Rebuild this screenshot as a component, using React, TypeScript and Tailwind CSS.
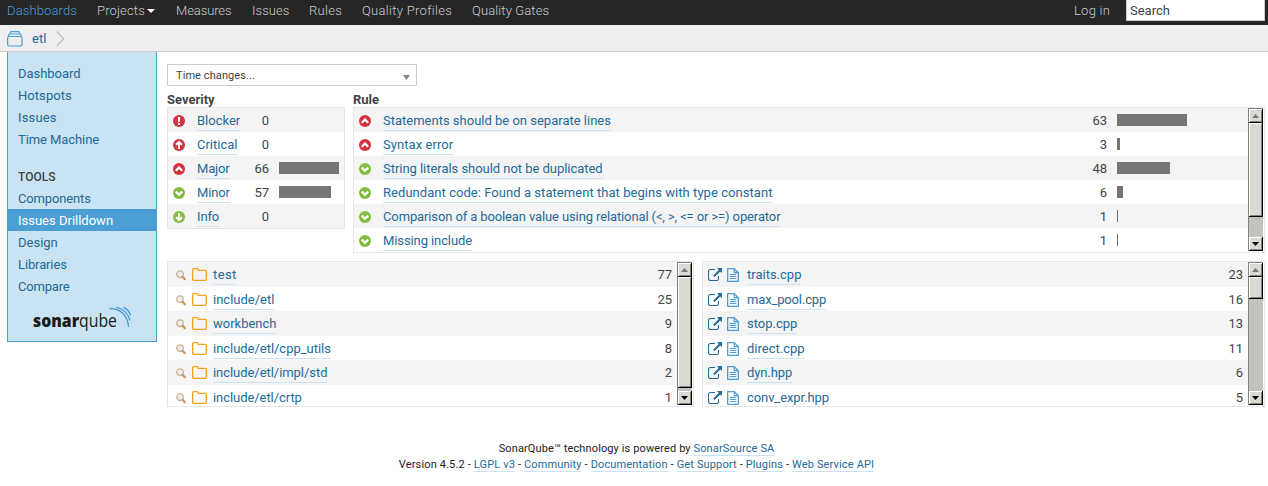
import React from "react";

const nav = [
  { label: "Dashboards", cls: "w-[90px] tracking-[0.12px] text-[#4b9fd5]" },
  { label: "Projects", cls: "w-[79px] tracking-[0.15px] text-[#ccc]", caret: true },
  { label: "Measures", cls: "w-[76px] tracking-[-0.1px] text-[#ccc]" },
  { label: "Issues", cls: "w-[57px] tracking-[0.05px] text-[#ccc]" },
  { label: "Rules", cls: "w-[53px] tracking-[0.3px] text-[#ccc]" },
  { label: "Quality Profiles", cls: "w-[110px] tracking-[0.3px] text-[#ccc]" },
  { label: "Quality Gates", cls: "w-[90px] tracking-[0.12px] text-[#ccc]" },
];

type Level = "blocker" | "critical" | "major" | "minor" | "info";

const severities: { level: Level; label: string; count: number; bar: string; cls: string }[] = [
  { level: "blocker", label: "Blocker", count: 0, bar: "w-0", cls: "" },
  { level: "critical", label: "Critical", count: 0, bar: "w-0", cls: "" },
  { level: "major", label: "Major", count: 66, bar: "w-[60px]", cls: "tracking-[-0.15px]" },
  { level: "minor", label: "Minor", count: 57, bar: "w-[52px]", cls: "tracking-[-0.15px]" },
  { level: "info", label: "Info", count: 0, bar: "w-0", cls: "tracking-[-0.15px]" },
];

const rules: { level: Level; label: string; count: number; bar: string; cls: string }[] = [
  { level: "major", label: "Statements should be on separate lines", count: 63, bar: "w-[70px]", cls: "" },
  { level: "major", label: "Syntax error", count: 3, bar: "w-[3px]", cls: "tracking-[0.06px]" },
  { level: "minor", label: "String literals should not be duplicated", count: 48, bar: "w-[53px]", cls: "tracking-[-0.04px]" },
  { level: "minor", label: "Redundant code: Found a statement that begins with type constant", count: 6, bar: "w-[6px]", cls: "tracking-[0.05px]" },
  { level: "minor", label: "Comparison of a boolean value using relational (<, >, <= or >=) operator", count: 1, bar: "w-px", cls: "tracking-[-0.12px]" },
  { level: "minor", label: "Missing include", count: 1, bar: "w-px", cls: "tracking-[-0.1px]" },
];

const folders = [
  { label: "test", count: 77, cls: "tracking-[0.4px]" },
  { label: "include/etl", count: 25, cls: "" },
  { label: "workbench", count: 9, cls: "" },
  { label: "include/etl/cpp_utils", count: 8, cls: "tracking-[-0.03px]" },
  { label: "include/etl/impl/std", count: 2, cls: "tracking-[-0.05px]" },
  { label: "include/etl/crtp", count: 1, cls: "tracking-[-0.06px]" },
];

const files = [
  { label: "traits.cpp", count: 23, cls: "" },
  { label: "max_pool.cpp", count: 16, cls: "tracking-[-0.15px]" },
  { label: "stop.cpp", count: 13, cls: "" },
  { label: "direct.cpp", count: 11, cls: "" },
  { label: "dyn.hpp", count: 6, cls: "tracking-[-0.1px]" },
  { label: "conv_expr.hpp", count: 5, cls: "tracking-[-0.08px]" },
];

const rowHeights = ["h-[25px]", "h-6", "h-[25px]", "h-6", "h-[25px]", "h-[25px]"];

function SeverityIcon({ level }: { level: Level }) {
  const green = level === "minor" || level === "info";
  return (
    <svg width="12" height="12" viewBox="0 0 12 12" fill="none" className="mt-[2px] block shrink-0">
      <circle cx="6" cy="6" r="6" fill={green ? "#85bb43" : "#d4333f"} />
      {level === "blocker" && (
        <g fill="#fff">
          <path d="M4.8 2h2.4l-.3 5H5.1z" />
          <rect x="5" y="8" width="2" height="2" />
        </g>
      )}
      {level === "critical" && <path d="M6 10V3M3 5.8 6 2.9l3 2.9" stroke="#fff" strokeWidth="1.9" />}
      {level === "major" && <path d="M2.8 7.7 6 4.5l3.2 3.2" stroke="#fff" strokeWidth="2.2" />}
      {level === "minor" && <path d="M2.8 4.6 6 7.8l3.2-3.2" stroke="#fff" strokeWidth="2.2" />}
      {level === "info" && <path d="M6 2v7M3 6.2l3 2.9 3-2.9" stroke="#fff" strokeWidth="1.9" />}
    </svg>
  );
}

function MagnifierIcon() {
  return (
    <svg width="10" height="11" viewBox="0 0 10 11" fill="none" className="block">
      <circle cx="4" cy="4.2" r="3.3" fill="#e6eef6" stroke="#d9b088" strokeWidth="1.3" />
      <path d="m6.6 6.8 2.2 2.4" stroke="#c9995f" strokeWidth="2.2" strokeLinecap="round" />
    </svg>
  );
}

function FolderIcon() {
  return (
    <svg width="15" height="13" viewBox="0 0 15 13" fill="none" className="block">
      <path
        d="M.65 1.9Q.65.65 1.9.65h3.2q1.2 0 1.2 1.2v.5h6.8q1.25 0 1.25 1.25v7.5q0 1.25-1.25 1.25H1.9Q.65 12.35.65 11.1z"
        stroke="#f9a01b"
        strokeWidth="1.3"
      />
    </svg>
  );
}

function ExternalIcon() {
  return (
    <svg width="14" height="13" viewBox="0 0 14 13" fill="none" className="block">
      <path d="M7 1.5H2.5Q.5 1.5.5 3.5v7q0 2 2 2H9q1.500 0 1.500-2V8" stroke="#236a97" strokeWidth="1.05" />
      <path d="M9 0h5v5l-1.700-1.600-5.800 5.700-1.300-1.300 5.600-5.900z" fill="#236a97" />
    </svg>
  );
}

function FileIcon() {
  return (
    <svg width="12" height="14" viewBox="0 0 12 14" fill="none" className="block">
      <path d="M.65.65h6.6l4.1 4.1v8.6H.65z" stroke="#4b9fd5" strokeWidth="1.3" strokeLinejoin="round" />
      <path d="M7.3.8v3.9h3.9M2.7 6.5h6.6M2.7 8.5h6.6M2.7 10.5h6.6" stroke="#4b9fd5" strokeWidth="1.2" />
    </svg>
  );
}

function ProjectIcon() {
  return (
    <svg width="16" height="16" viewBox="0 0 16 16" fill="none" className="block" stroke="#4b9fd5">
      <rect x=".6" y="5.5" width="14.4" height="9.5" rx="1.4" strokeWidth="1.2" />
      <path d="M1.5 5.3V4q0-1 1-1h10.6q1 0 1 1v1.3M3.2 2.8V1.5q0-.9.9-.9h7.4q.9 0 .9.9v1.3" strokeWidth="1.1" />
    </svg>
  );
}

function Logo() {
  return (
    <svg width="100" height="28" viewBox="0 0 100 28" className="block">
      <text x="1" y="21" fontFamily="'Open Sans', sans-serif" fontSize="18" fontWeight="800" fill="#1b1b1b" textLength="84" lengthAdjust="spacingAndGlyphs">
        sonar<tspan fontWeight="400">qube</tspan>
      </text>
      <g fill="none" stroke="#4b9fd5" strokeWidth="1.4">
        <path d="M77.500 2.500C88 2 96 9.500 96.500 21" />
        <path d="M84.500 1.200C91 3 96.500 8 98 14.500" />
        <path d="M91.500 1.200c3.200 1.700 5.700 4.300 7.300 7.800" />
      </g>
    </svg>
  );
}

function ScrollButton({ up }: { up?: boolean }) {
  return (
    <div className="flex h-[14px] w-[14px] shrink-0 items-center justify-center border-r border-b border-black bg-[#dad9d2] shadow-[inset_1px_1px_0_#fff,inset_-1px_-1px_0_#85847e]">
      <svg width="7" height="4" viewBox="0 0 7 4" className="block">
        {up ? <path d="M3.5 0 7 4H0z" fill="#777" /> : <path d="M0 0h7L3.5 4z" fill="#000" />}
      </svg>
    </div>
  );
}

function Scrollbar({ thumb }: { thumb: string }) {
  return (
    <div className="flex h-[143px] w-[15px] shrink-0 flex-col border-t border-l border-[#85847e] bg-[#c3c2bc]">
      <ScrollButton up />
      <div className={`w-[14px] border-r border-b border-black bg-[#dad9d2] shadow-[inset_1px_1px_0_#fff,inset_-1px_-1px_0_#85847e] ${thumb}`} />
      <div className="mt-auto">
        <ScrollButton />
      </div>
    </div>
  );
}

function Link({ children, cls = "" }: { children: React.ReactNode; cls?: string }) {
  return <a className={`block h-[18px] border-b border-[#cae3f2] leading-4 whitespace-nowrap text-[#236a97] ${cls}`}>{children}</a>;
}

function SideItem({ label, active, cls = "" }: { label: string; active?: boolean; cls?: string }) {
  return (
    <a className={`block h-[22px] pl-[10px] leading-[24px] ${active ? "bg-[#4b9fd5] text-white" : "text-[#236a97]"} ${cls}`}>{label}</a>
  );
}

export default function App() {
  return (
    <div className="h-[486px] w-[1268px] overflow-hidden bg-white font-[Roboto,sans-serif] text-[13px] text-[#444]">
      <header className="flex h-[25px] bg-[#262626] pl-[7px] font-light">
        <nav className="flex">
          {nav.map((n) => (
            <a key={n.label} className={`flex h-[22px] items-center whitespace-nowrap ${n.cls}`}>
              {n.label}
              {n.caret && (
                <svg width="8" height="4" viewBox="0 0 8 4" className="ml-[2px]">
                  <path d="M0 0h8L4 4z" fill="#fff" />
                </svg>
              )}
            </a>
          ))}
        </nav>
        <a className="ml-auto h-[22px] w-[52px] leading-[22px] tracking-[0.25px] text-[#ccc]">Log in</a>
        <div className="mr-[3px] h-[21px] w-[139px] border-r border-b border-l border-[#ccc] bg-white pl-[3px] font-normal leading-[22px]">Search</div>
      </header>

      <div className="flex h-[27px] border-b border-[#ccc] bg-[#eee] pt-[6px] pl-[7px]">
        <ProjectIcon />
        <a className="ml-[9px] h-4 leading-4 text-[#236a97]">etl</a>
        <svg width="9" height="16" viewBox="0 0 9 16" fill="none" className="ml-[10px]">
          <path d="m.7.5 7 7.2-7 7.2" stroke="#bbb" strokeWidth="1.2" />
        </svg>
      </div>

      <div className="flex pl-[7px]">
        <aside className="h-[290px] w-[150px] shrink-0 border-r border-b border-l border-[#4b9fd5] bg-[#cae3f2] pt-[10px]">
          <SideItem label="Dashboard" cls="tracking-[-0.05px]" />
          <SideItem label="Hotspots" cls="tracking-[0.06px]" />
          <SideItem label="Issues" cls="tracking-[0.15px]" />
          <SideItem label="Time Machine" cls="tracking-[-0.08px]" />
          <div className="mt-[15px] h-[22px] pl-[10px] text-[12px] leading-[24px] font-medium">TOOLS</div>
          <SideItem label="Components" cls="tracking-[-0.15px]" />
          <SideItem label="Issues Drilldown" active />
          <SideItem label="Design" />
          <SideItem label="Libraries" cls="tracking-[-0.12px]" />
          <SideItem label="Compare" cls="tracking-[-0.18px]" />
          <div className="mt-[9px] ml-6">
            <Logo />
          </div>
        </aside>

        <main className="ml-[10px] w-[1098px] pt-3">
          <div className="flex h-[22px] w-[250px] items-center justify-between border border-[#ccc] pr-[6px] pl-2 text-[11px] leading-5">
            <span className="pt-[2px] tracking-[0.08px]">Time changes...</span>
            <svg width="7" height="5" viewBox="0 0 7 5" className="mt-[5px]">
              <path d="M0 0h7L3.5 5z" fill="#888" />
            </svg>
          </div>

          <div className="flex gap-2 pt-[5px]">
            <section className="w-[178px]">
              <h3 className="h-4 leading-[17px] font-bold">Severity</h3>
              <div className="border border-[#e6e6e6]">
                {severities.map((s) => (
                  <div key={s.label} className="flex h-6 items-center pl-[5px] odd:bg-[#f4f4f4]">
                    <SeverityIcon level={s.level} />
                    <div className="flex w-[49px] shrink-0 pt-1 pl-3">
                      <Link cls={s.cls}>{s.label}</Link>
                    </div>
                    <span className="w-[35px] pt-[2px] text-right">{s.count}</span>
                    <div className={`ml-[10px] h-3 bg-[#777] ${s.bar}`} />
                  </div>
                ))}
              </div>
            </section>

            <section className="w-[912px]">
              <h3 className="h-4 leading-[17px] font-bold">Rule</h3>
              <div className="flex h-[146px] border border-[#e6e6e6]">
                <div className="w-[894px]">
                  {rules.map((r) => (
                    <div key={r.label} className="flex h-6 items-center pl-[5px] odd:bg-[#f4f4f4]">
                      <SeverityIcon level={r.level} />
                      <div className="flex w-[690px] pt-1 pl-3">
                        <Link cls={r.cls}>{r.label}</Link>
                      </div>
                      <span className="w-[46px] pt-[2px] text-right">{r.count}</span>
                      <div className={`ml-[10px] h-3 bg-[#777] ${r.bar}`} />
                    </div>
                  ))}
                </div>
                <Scrollbar thumb="h-[94px]" />
              </div>
            </section>
          </div>

          <div className="mt-2 flex gap-2">
            <section className="flex h-[146px] w-[527px] overflow-hidden border border-[#e6e6e6]">
              <div className="w-[509px]">
                {folders.map((f, i) => (
                  <div key={f.label} className={`flex pl-2 odd:bg-[#f4f4f4] ${rowHeights[i]}`}>
                    <div className="w-4 pt-2">
                      <MagnifierIcon />
                    </div>
                    <div className="w-[21px] pt-[6px]">
                      <FolderIcon />
                    </div>
                    <div className="flex pt-[5px]">
                      <Link cls={f.cls}>{f.label}</Link>
                    </div>
                    <span className="ml-auto pt-[5px] pr-[5px] leading-4">{f.count}</span>
                  </div>
                ))}
              </div>
              <Scrollbar thumb="h-[111px]" />
            </section>

            <section className="flex h-[146px] w-[563px] overflow-hidden border border-[#e6e6e6]">
              <div className="w-[545px]">
                {files.map((f, i) => (
                  <div key={f.label} className={`flex pl-[5px] odd:bg-[#f4f4f4] ${rowHeights[i]}`}>
                    <div className="w-[19px] pt-[6px]">
                      <ExternalIcon />
                    </div>
                    <div className="w-5 pt-[6px]">
                      <FileIcon />
                    </div>
                    <div className="flex pt-[5px]">
                      <Link cls={f.cls}>{f.label}</Link>
                    </div>
                    <span className="ml-auto pt-[5px] pr-[5px] leading-4">{f.count}</span>
                  </div>
                ))}
              </div>
              <Scrollbar thumb="h-[22px]" />
            </section>
          </div>
        </main>
      </div>

      <footer className="mt-[34px] pl-[5px] text-center text-[11px] leading-4 text-[#222]">
        <div className="tracking-[0.12px]">
          SonarQube™ technology is powered by <a className="border-b border-[#cae3f2] text-[#236a97]">SonarSource SA</a>
        </div>
        <div className="tracking-[0.15px]">
          Version 4.5.2
          {["LGPL v3", "Community", "Documentation", "Get Support", "Plugins", "Web Service API"].map((l) => (
            <React.Fragment key={l}>
              {" - "}
              <a className="border-b border-[#cae3f2] text-[#236a97]">{l}</a>
            </React.Fragment>
          ))}
        </div>
      </footer>
    </div>
  );
}
